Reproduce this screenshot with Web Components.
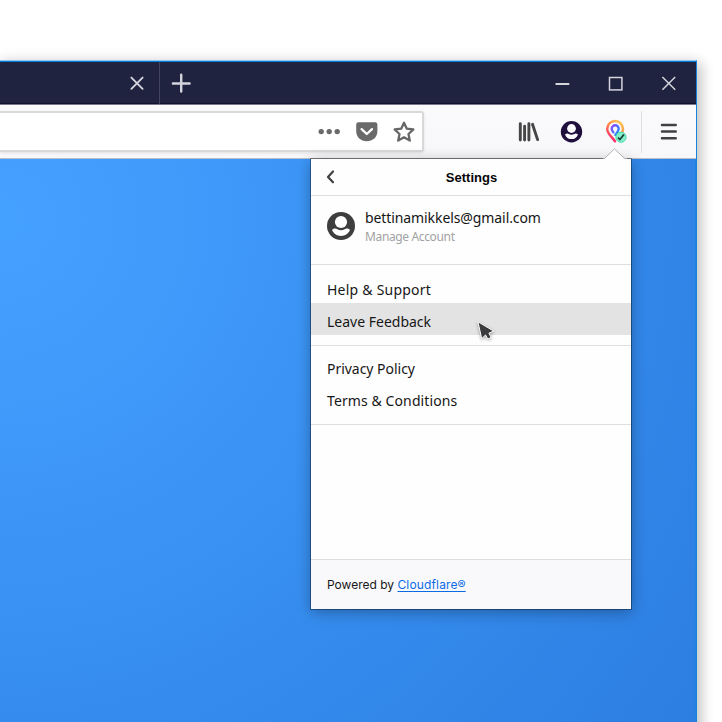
<!DOCTYPE html>
<html lang="en">
<head>
<meta charset="utf-8">
<title>Settings</title>
<style>
html,body{margin:0;width:722px;height:722px;overflow:hidden;background:#fff}
body{font-family:"Noto Sans","Liberation Sans",sans-serif;color:#111}
</style>
</head>
<body>
<browser-window>
  <title-bar slot="title"></title-bar>
  <tool-bar slot="tools"></tool-bar>
  <settings-panel>
    <account-row email="bettinamikkels@gmail.com">Manage Account</account-row>
    <menu-group style="--h:80px;--top:6px">
      <menu-row style="--ls:.23px">Help &amp; Support</menu-row>
      <menu-row active style="--ls:0px">Leave Feedback</menu-row>
    </menu-group>
    <menu-group style="--h:78px;--top:4px">
      <menu-row style="--ls:-.03px">Privacy Policy</menu-row>
      <menu-row>Terms &amp; Conditions</menu-row>
    </menu-group>
  </settings-panel>
  <mouse-pointer></mouse-pointer>
</browser-window>
<script>
const define = (name, html) => customElements.define(name, class extends HTMLElement {
  constructor() {
    super();
    this.attachShadow({ mode: 'open' }).innerHTML = html;
  }
  connectedCallback() {
    const email = this.shadowRoot.querySelector('.email');
    if (email) email.textContent = this.getAttribute('email');
  }
});

define('browser-window', `
<style>
:host{display:block;padding-top:60px;position:relative}
.frame{box-sizing:border-box;width:697px;height:680px;border-top:1px solid #8bc7f5;border-right:1px solid #1683dc;box-shadow:3px 5px 12px 2px rgba(0,0,0,.2),0 0 16px rgba(0,0,0,.06);display:flex;flex-direction:column}
.page{flex:1;background:radial-gradient(circle at 0 60px,#45a1ff 0,#3e98f9 240px,#348aec 560px,#2c7de0 890px);border-right:1px solid #2382df;box-sizing:border-box;display:flex;justify-content:flex-end;align-items:flex-start;padding-right:64px}
</style>
<div class="frame"><slot name="title"></slot><slot name="tools"></slot><div class="page"><slot></slot></div></div>`);

define('title-bar', `
<style>
:host{display:flex;box-sizing:border-box;height:44px;flex:none;background:#202340;border-top:1px solid #0b7bd8;border-bottom:1px solid #77778b;box-shadow:inset 0 -1px #11102e;justify-content:space-between}
svg{display:block;fill:none;stroke:#d4d4dc}
.tab{display:flex;align-items:center;box-sizing:border-box;width:160px;justify-content:flex-end;padding-right:14px;border-right:1px solid #43445f}
.left{display:flex;align-items:center}.left .tab{height:42px}.new{margin-left:11px}
.controls{display:flex;align-items:center;gap:33px;padding-right:17px}
</style>
<div class="left"><div class="tab"><svg width="16" height="16" stroke-width="1.9" stroke-linecap="round"><path d="M2.4 2.6 13.6 13.8M13.6 2.6 2.4 13.8"/></svg></div>
<svg class="new" width="20" height="20" stroke-width="2.4" stroke-linecap="round"><path d="M10.2 1.8V18.6M1.9 10.5H18.6"/></svg></div>
<div class="controls">
<svg width="20" height="20" stroke-width="2"><path d="M2.5 11H16.3"/></svg>
<svg width="20" height="20" stroke-width="1.5"><rect x="3.5" y="4.5" width="12.4" height="12.4"/></svg>
<svg width="20" height="20" stroke-width="1.5"><path d="M3.4 4 16.2 16.8M16.2 4 3.4 16.8"/></svg>
</div>`);

define('tool-bar', `
<style>
:host{display:flex;box-sizing:border-box;height:54px;flex:none;background:linear-gradient(#fafafc,#f8f8fb);border-bottom:1px solid #b9bec6;align-items:center}
svg{display:block;overflow:visible}
.url{box-sizing:border-box;width:424px;height:41px;flex:none;background:#fff;border:2px solid #d9d9db;border-left:0;border-radius:0 3px 3px 0;box-shadow:0 1px 3px rgba(0,0,0,.1);display:flex;align-items:center;justify-content:flex-end;gap:13px;padding-right:6px}
.icons{display:flex;align-items:center;gap:20px;margin-left:93px}
.menu{height:42px;border-left:1px solid #dedee3;margin-left:12px;padding-left:17px;display:flex;align-items:center}
</style>
<div class="url">
<svg width="24" height="24" fill="#6a6a6a"><circle cx="3.2" cy="11.6" r="2.7"/><circle cx="11.2" cy="11.6" r="2.7"/><circle cx="19.2" cy="11.6" r="2.7"/></svg>
<svg width="24" height="24"><path d="M3.4 2.3h16.8a2.2 2.2 0 0 1 2.2 2.2v6.6c0 6.2-4.6 10.2-10.6 10.2S1.2 17.3 1.2 11.1V4.5a2.2 2.2 0 0 1 2.2-2.2Z" fill="#6a6a6a"/><path d="m6.6 9.1 5.2 4.9L17 9.1" fill="none" stroke="#fff" stroke-width="2.3" stroke-linecap="round" stroke-linejoin="round"/></svg>
<svg width="24" height="24"><path d="m12 2.7 2.8 6 6.6.8-4.9 4.5 1.3 6.6-5.8-3.3-5.8 3.3 1.3-6.6-4.9-4.5 6.6-.8Z" fill="none" stroke="#676767" stroke-width="2.3" stroke-linejoin="round"/></svg>
</div>
<div class="icons">
<svg width="24" height="24" fill="none" stroke="#464646" stroke-width="2.9" stroke-linecap="round"><path d="M3.3 3.6V20M7.6 6.2V20M11.9 3.6V20M15.5 4.3l5.1 15.3"/></svg>
<svg width="24" height="24"><circle cx="10.5" cy="11.8" r="10.7" fill="#200f3d"/><circle cx="10.5" cy="8.5" r="4.4" fill="#fafafc"/><path d="M4 14.4c1.600-1.200 2.900-1 3.700-.4 1.600 1.100 4 1.100 5.600 0 .8-.6 2.100-.8 3.700.4-1 3-3.500 4.700-6.500 4.700S5 17.4 4 14.4Z" fill="#fafafc"/></svg>
<svg width="24" height="24"><defs><linearGradient id="p" x1=".8" y1="0" x2=".2" y2="1"><stop stop-color="#ffc34c"/><stop offset=".45" stop-color="#ff884d"/><stop offset="1" stop-color="#ff1672"/></linearGradient><linearGradient id="q" x1="0" y1="0" x2="1" y2="1"><stop stop-color="#8d49ff"/><stop offset="1" stop-color="#1c91ff"/></linearGradient></defs><path d="M10 21.2C7.5 17.6 2.2 13.4 2.2 8.9a7.9 7.9 0 0 1 15.800 0c0 2-.8 3.900-2 5.600" fill="none" stroke="url(#p)" stroke-width="2.5" stroke-linecap="round"/><path d="M8.300 12.200C6.900 10.400 6.700 9.500 6.700 8.800a3.500 3.500 0 0 1 7 0c0 2.200-1.500 3.600-3.400 6.100" fill="none" stroke="url(#q)" stroke-width="2.4" stroke-linecap="round"/><circle cx="16" cy="17.200" r="5.100" fill="#84eec8" stroke="#45dba8" stroke-width="1"/><path d="m13 17.600 1.900 1.900 4-5" fill="none" stroke="#173b3a" stroke-width="1.700"/></svg>
</div>
<div class="menu"><svg width="20" height="24" fill="none" stroke="#414141" stroke-width="2.5" stroke-linecap="round"><path d="M3 5h13.700M3 11.600h13.700M3 18.200h13.700"/></svg></div>`);

define('settings-panel', `
<style>
:host{display:flex;flex-direction:column;position:relative;width:320px;height:450px;flex:none;background:#fefefe;box-shadow:0 0 0 1px rgba(0,0,0,.36),0 3px 14px rgba(0,0,0,.32)}
.arrow{position:absolute;left:292px;top:-11px}
header{box-sizing:border-box;height:37px;display:flex;align-items:center;border-bottom:1px solid #dfdfe1;padding:0 16px 0 14px}
h1{flex:1;margin:0 8px 0 0;text-align:center;font:bold 13px/36px "Liberation Sans",sans-serif;color:#050505;padding-top:1px;height:36px;box-sizing:border-box}
footer{box-sizing:border-box;height:50px;margin-top:auto;border-top:1px solid #dedee1;background:#f9f9fb;padding:0 16px;font:12px/50px Inter,"Liberation Sans",sans-serif;color:#171717;letter-spacing:0;white-space:nowrap}
a{color:#0a6be6;text-decoration:underline;text-underline-offset:2px;text-decoration-skip-ink:none;letter-spacing:.15px}
</style>
<svg class="arrow" width="24" height="13"><path d="M0 10.5h1.500L11.500.8l10 9.700H24V13H0Z" fill="#fefefe"/><path d="M0 10.5h1.500L11.500.8l10 9.700H24" fill="none" stroke="#aeb0b3"/></svg>
<header><svg width="11" height="16" fill="none" stroke="#404040" stroke-width="2.2" stroke-linecap="round" stroke-linejoin="round"><path d="M8 2.500 3 7.900l5 5.400"/></svg><h1>Settings</h1></header>
<slot></slot>
<footer>Powered by <a>Cloudflare®</a></footer>`);

define('account-row', `
<style>
:host{display:flex;box-sizing:border-box;height:69px;flex:none;border-bottom:1px solid #dfdfe1;padding:11px 16px 0;gap:10px;white-space:nowrap}
svg{margin-top:5px;flex:none}
.email{font-size:14px;line-height:22px;letter-spacing:-.09px;color:#151515}
.sub{font-size:12px;line-height:16px;letter-spacing:-.36px;color:#a2a2a2}
</style>
<svg width="28" height="28"><circle cx="14" cy="14" r="14" fill="#3e3e3e"/><circle cx="14" cy="10" r="6.100" fill="#fff"/><path d="M5 17.800c2.200-1.800 4-1.600 5.300-.6 2.200 1.500 5.200 1.500 7.400 0 1.300-1 3.100-1.200 5.300.6-1.400 3.900-4.900 6.200-9 6.200s-7.600-2.300-9-6.200Z" fill="#fff"/></svg>
<div><div class="email"></div><div class="sub"><slot></slot></div></div>`);

define('menu-group', `
<style>:host{display:block;box-sizing:content-box;height:var(--h);flex:none;border-bottom:1px solid #dfdfe1}div{padding-top:var(--top)}</style>
<div><slot></slot></div>`);

define('menu-row', `
<style>:host{display:block;box-sizing:border-box;height:32px;padding:1px 16px 0;font-size:14px;line-height:36px;letter-spacing:var(--ls,.1px);white-space:nowrap;color:#171717}:host([active]){background:#e3e3e3}</style><slot></slot>`);

define('mouse-pointer', `
<style>:host{position:absolute;left:474px;top:318px}svg{display:block;overflow:visible;filter:drop-shadow(0 1px 1.5px rgba(0,0,0,.35))}</style>
<svg width="24" height="26"><path d="M3.900 3.700 7.700 20.700 11.500 17 13.900 21.100 17.200 19.300 14.900 15.200 19.700 13.100Z" fill="#3b3b3e" stroke="#fff" stroke-width="1" stroke-linejoin="round"/></svg>`);
</script>
</body>
</html>
